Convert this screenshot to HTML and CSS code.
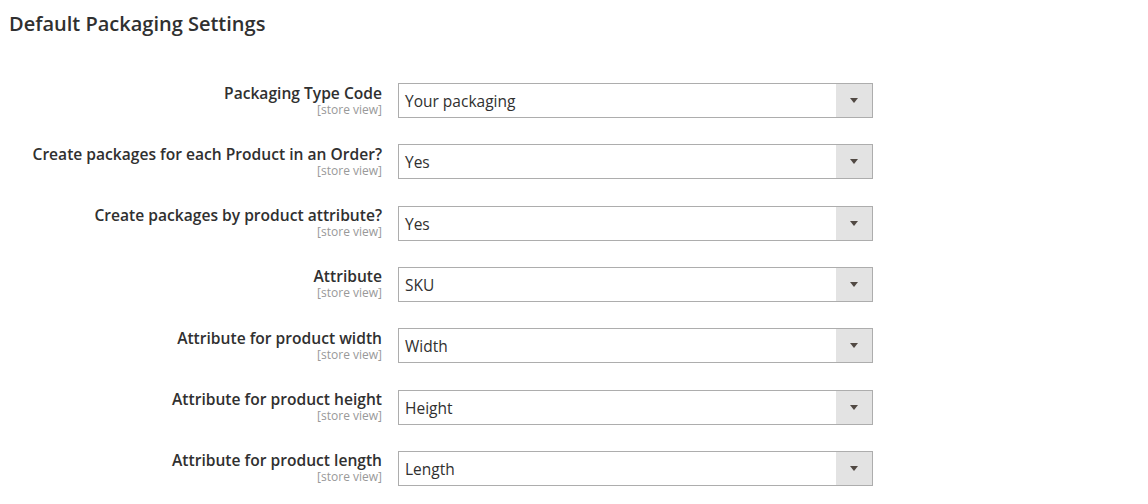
FILE: index.html
```html
<!DOCTYPE html>
<html>
<head>
<meta charset="utf-8">
<link rel="stylesheet" href="styles.css">
</head>
<body>
<div class="page">
  <h2 class="title">Default Packaging Settings</h2>
  <div class="form">
    <div class="row">
      <div class="label"><span class="name">Packaging Type Code</span><span class="scope">[store view]</span></div>
      <div class="select"><span class="value">Your packaging</span><span class="arrow"><i></i></span></div>
    </div>
    <div class="row">
      <div class="label"><span class="name">Create packages for each Product in an Order?</span><span class="scope">[store view]</span></div>
      <div class="select"><span class="value">Yes</span><span class="arrow"><i></i></span></div>
    </div>
    <div class="row">
      <div class="label"><span class="name">Create packages by product attribute?</span><span class="scope">[store view]</span></div>
      <div class="select"><span class="value">Yes</span><span class="arrow"><i></i></span></div>
    </div>
    <div class="row">
      <div class="label"><span class="name">Attribute</span><span class="scope">[store view]</span></div>
      <div class="select"><span class="value">SKU</span><span class="arrow"><i></i></span></div>
    </div>
    <div class="row">
      <div class="label"><span class="name">Attribute for product width</span><span class="scope">[store view]</span></div>
      <div class="select"><span class="value">Width</span><span class="arrow"><i></i></span></div>
    </div>
    <div class="row">
      <div class="label"><span class="name">Attribute for product height</span><span class="scope">[store view]</span></div>
      <div class="select"><span class="value">Height</span><span class="arrow"><i></i></span></div>
    </div>
    <div class="row">
      <div class="label"><span class="name">Attribute for product length</span><span class="scope">[store view]</span></div>
      <div class="select"><span class="value">Length</span><span class="arrow"><i></i></span></div>
    </div>
  </div>
</div>
</body>
</html>
```

FILE: styles.css
```css
html, body {
  margin: 0;
  padding: 0;
  background: #ffffff;
}
body {
  font-family: "Open Sans", "Liberation Sans", sans-serif;
  color: #303030;
}
.page {
  padding: 0 0 0 9px;
}
.title {
  margin: 0;
  padding-top: 11px;
  font-size: 20px;
  font-weight: 600;
  line-height: 26px;
  color: #303030;
}
.form {
  padding-top: 46px;
}
.row {
  display: flex;
  align-items: flex-start;
  height: 61.33px;
}
.label {
  width: 373px;
  padding-right: 16px;
  padding-top: 0.5px;
  display: flex;
  flex-direction: column;
  align-items: flex-end;
  text-align: right;
}
.name {
  font-size: 15.6px;
  font-weight: 600;
  line-height: 19px;
  color: #303030;
}
.scope {
  font-size: 12px;
  line-height: 14px;
  color: #999999;
}
.select {
  box-sizing: border-box;
  width: 475px;
  height: 35px;
  border: 1px solid #adadad;
  display: flex;
  align-items: stretch;
  background: #ffffff;
}
.value {
  flex: 1;
  padding-left: 6px;
  padding-top: 1px;
  font-size: 15.5px;
  line-height: 32px;
  color: #303030;
}
.arrow {
  width: 36px;
  background: #e3e3e3;
  display: flex;
  align-items: center;
  justify-content: center;
}
.arrow i {
  width: 0;
  height: 0;
  border-left: 4px solid transparent;
  border-right: 4px solid transparent;
  border-top: 5px solid #514943;
}
```
